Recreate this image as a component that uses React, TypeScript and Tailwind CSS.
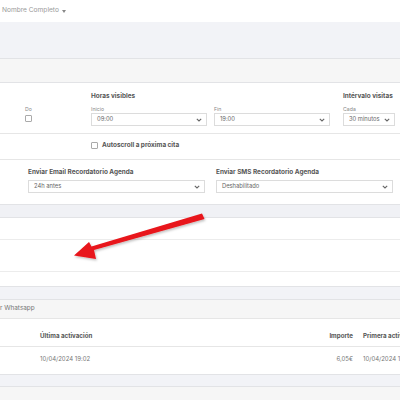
import React from "react";

const Chevron = () => (
  <svg width="6" height="4" viewBox="0 0 6 4" className="shrink-0">
    <polyline points="0.8,0.8 3,3 5.2,0.8" fill="none" stroke="#666" strokeWidth="1.1" />
  </svg>
);

const Select = ({ value, className }: { value: string; className: string }) => (
  <div
    className={`h-[13px] border border-[#dcdcdc] bg-white flex items-center justify-between pl-[5px] pr-[4px] text-[5.8px] text-[#666] ${className}`}
  >
    <span>{value}</span>
    <Chevron />
  </div>
);

const Check = () => <div className="w-[7px] h-[7px] border border-[#aaa] bg-white rounded-[1px] shrink-0" />;

export default function App() {
  return (
    <div className="relative w-[400px] h-[400px] overflow-hidden bg-[#f2f3f7] font-['Inter',sans-serif]">
      {/* top bar */}
      <div className="h-[22px] bg-white flex items-center pl-[2px] gap-[3px] text-[6.6px] text-[#9a9a9a]">
        <span>Nombre Completo</span>
        <svg width="4" height="3" viewBox="0 0 4 3">
          <polygon points="0,0 4,0 2,3" fill="#888" />
        </svg>
      </div>
      <div className="h-[36px]" />

      {/* card 1 */}
      <div className="border-t border-[#e2e3e6]">
        <div className="h-[24px] bg-[#f6f6f6] border-b border-[#e2e3e6]" />
        <div className="bg-white border-b border-[#e2e3e6]">
          {/* row 1 */}
          <div className="h-[51px] border-b border-[#e6e6e6] flex pl-[25px] pt-[9px]">
            <div className="w-[66px] pt-[14px]">
              <div className="text-[5.2px] text-[#888] leading-[7px]">Do</div>
              <div className="mt-[2px]">
                <Check />
              </div>
            </div>
            <div className="w-[239px] shrink-0">
              <div className="text-[6.4px] font-bold text-[#555] leading-[8px]">Horas visibles</div>
              <div className="flex gap-[7px] mt-[6px]">
                <div className="w-[116px]">
                  <div className="text-[5.2px] text-[#888] leading-[7px]">Inicio</div>
                  <Select value="09:00" className="w-[116px]" />
                </div>
                <div className="w-[116px]">
                  <div className="text-[5.2px] text-[#888] leading-[7px]">Fin</div>
                  <Select value="19:00" className="w-[116px]" />
                </div>
              </div>
            </div>
            <div className="ml-[13px] w-[57px] shrink-0">
              <div className="text-[6.4px] font-bold text-[#555] leading-[8px] whitespace-nowrap">Intérvalo visitas</div>
              <div className="mt-[6px]">
                <div className="text-[5.2px] text-[#888] leading-[7px]">Cada</div>
                <Select value="30 minutos" className="w-[52px]" />
              </div>
            </div>
          </div>
          {/* row 2 */}
          <div className="h-[26px] border-b border-[#e6e6e6] flex items-center pl-[91px] gap-[4px] pb-[2px]">
            <Check />
            <span className="text-[6.4px] font-bold text-[#555]">Autoscroll a próxima cita</span>
          </div>
          {/* row 3 */}
          <div className="h-[44px] flex pl-[28px] gap-[11px] pt-[8px]">
            <div className="w-[177px] shrink-0">
              <div className="text-[6.4px] font-bold text-[#555] leading-[8px] whitespace-nowrap">Enviar Email Recordatorio Agenda</div>
              <Select value="24h antes" className="w-[177px] mt-[4px]" />
            </div>
            <div className="w-[177px] shrink-0">
              <div className="text-[6.4px] font-bold text-[#555] leading-[8px] whitespace-nowrap">Enviar SMS Recordatorio Agenda</div>
              <Select value="Deshabilitado" className="w-[177px] mt-[4px]" />
            </div>
          </div>
        </div>
      </div>

      {/* gap */}
      <div className="h-[12px] bg-[#f0f1f5]" />

      {/* card 2 */}
      <div className="bg-white border-t border-b border-[#e2e3e6]">
        <div className="h-[22px] border-b border-[#ececec]" />
        <div className="h-[32px] border-b border-[#ececec]" />
        <div className="h-[14px]" />
      </div>

      <div className="h-[12px]" />

      {/* card 3 */}
      <div className="border-t border-[#e2e3e6]">
        <div className="h-[19px] bg-[#f6f6f6] border-b border-[#e6e6e6] flex items-center text-[6.4px] text-[#777]">
          r Whatsapp
        </div>
        <div className="bg-white border-b border-[#e2e3e6]">
          <div className="h-[28px] border-b border-[#e6e6e6] flex items-end pb-[6px] text-[6.2px] font-bold text-[#555] whitespace-nowrap">
            <span className="ml-[40px] w-[200px] shrink-0">Última activación</span>
            <span className="w-[113px] shrink-0 text-right">Importe</span>
            <span className="ml-[10px] shrink-0">Primera activación</span>
          </div>
          <div className="h-[27px] flex items-start pt-[7px] text-[6px] text-[#777] whitespace-nowrap">
            <span className="ml-[40px] w-[200px] shrink-0">10/04/2024 19:02</span>
            <span className="w-[113px] shrink-0 text-right">6,05€</span>
            <span className="ml-[10px] shrink-0">10/04/2024 19:02</span>
          </div>
        </div>
      </div>
      <div className="h-[11px]" />
      <div className="border-t border-[#e2e3e6] h-[20px] bg-[#f6f6f6]" />

      {/* arrow overlay */}
      <svg className="absolute left-0 top-0 pointer-events-none" width="400" height="400" viewBox="0 0 400 400">
        <defs>
          <filter id="sh" x="-20%" y="-20%" width="140%" height="140%">
            <feDropShadow dx="1" dy="1.5" stdDeviation="1.2" floodColor="#000" floodOpacity="0.25" />
          </filter>
        </defs>
        <polygon
          points="202,213.5 204.5,219 94,250 96,259 74,255.5 89,242 91.5,246.5"
          fill="#e8141a"
          filter="url(#sh)"
        />
      </svg>
    </div>
  );
}
